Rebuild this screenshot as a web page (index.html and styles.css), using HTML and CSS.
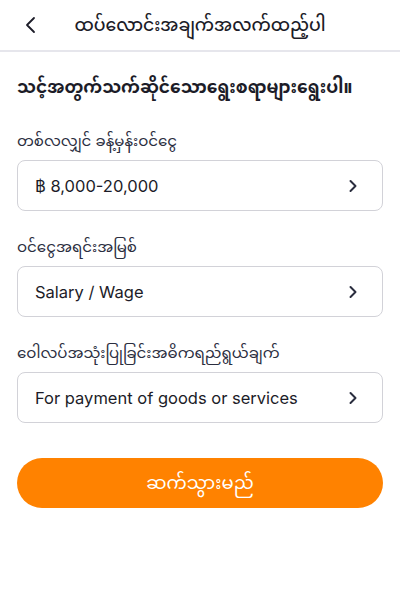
FILE: index.html
```html
<!DOCTYPE html>
<html>
<head>
    <title>Additional Information</title>
    <meta name="viewport" content="width=device-width, initial-scale=1.0">
    <link rel="stylesheet" href="styles.css">
</head>
<body>
<div class="header">
    <button class="back-btn" aria-label="Back">
        <svg width="12" height="18" viewBox="0 0 12 18"><path d="M10 2 L3 9 L10 16" fill="none" stroke="#1c1c28" stroke-width="1.8" stroke-linecap="round" stroke-linejoin="round"/></svg>
    </button>
    <h1 class="title">ထပ်လောင်းအချက်အလက်ထည့်ပါ</h1>
</div>

<div class="content">
    <h2 class="heading">သင့်အတွက်သက်ဆိုင်သောရွေးစရာများရွေးပါ။</h2>

    <div class="field">
        <div class="label">တစ်လလျှင် ခန့်မှန်းဝင်ငွေ</div>
        <div class="select-box">
            <span>฿ 8,000-20,000</span>
            <svg class="chevron" width="10" height="14" viewBox="0 0 10 14"><path d="M2.5 2 L7.5 7 L2.5 12" fill="none" stroke="#2a2d3e" stroke-width="2" stroke-linecap="round" stroke-linejoin="round"/></svg>
        </div>
    </div>

    <div class="field">
        <div class="label">ဝင်ငွေအရင်းအမြစ်</div>
        <div class="select-box">
            <span>Salary / Wage</span>
            <svg class="chevron" width="10" height="14" viewBox="0 0 10 14"><path d="M2.5 2 L7.5 7 L2.5 12" fill="none" stroke="#2a2d3e" stroke-width="2" stroke-linecap="round" stroke-linejoin="round"/></svg>
        </div>
    </div>

    <div class="field">
        <div class="label">ဝေါလပ်အသုံးပြုခြင်းအဓိကရည်ရွယ်ချက်</div>
        <div class="select-box">
            <span>For payment of goods or services</span>
            <svg class="chevron" width="10" height="14" viewBox="0 0 10 14"><path d="M2.5 2 L7.5 7 L2.5 12" fill="none" stroke="#2a2d3e" stroke-width="2" stroke-linecap="round" stroke-linejoin="round"/></svg>
        </div>
    </div>

    <button class="continue-btn">ဆက်သွားမည်</button>
</div>
</body>
</html>
```

FILE: styles.css
```css
body {
    font-family: Inter, "Noto Sans", "Noto Sans Myanmar", sans-serif;
    background: #fff;
    color: #1c1c28;
    margin: 0;
}
.header {
    height: 50px;
    border-bottom: 2px solid #e6e6ec;
    display: flex;
    align-items: center;
}
.back-btn {
    background: none;
    border: none;
    padding: 0;
    margin-left: 20px;
    width: 20px;
    height: 20px;
    display: flex;
    align-items: center;
    justify-content: center;
}
.title {
    flex: 1;
    margin: 0 40px 0 0;
    font-size: 17.2px;
    font-weight: 500;
    line-height: 26px;
    text-align: center;
}
.content {
    padding: 0 17px;
}
.heading {
    margin: 22px 0 30px;
    font-size: 17px;
    font-weight: 700;
    line-height: 26px;
}
.field {
    margin-bottom: 25px;
}
.label {
    font-size: 15px;
    line-height: 22px;
    color: #2a2d3e;
    margin-bottom: 8px;
}
.select-box {
    height: 51px;
    box-sizing: border-box;
    border: 1px solid #d2d2d8;
    border-radius: 8px;
    display: flex;
    align-items: center;
    justify-content: space-between;
    padding: 0 24px 0 17px;
    font-size: 16.5px;
}
.continue-btn {
    display: block;
    width: 100%;
    height: 50px;
    margin-top: 35px;
    background-color: #ff8200;
    color: white;
    border: none;
    border-radius: 25px;
    font-family: inherit;
    font-size: 18px;
    line-height: 24px;
}
```
